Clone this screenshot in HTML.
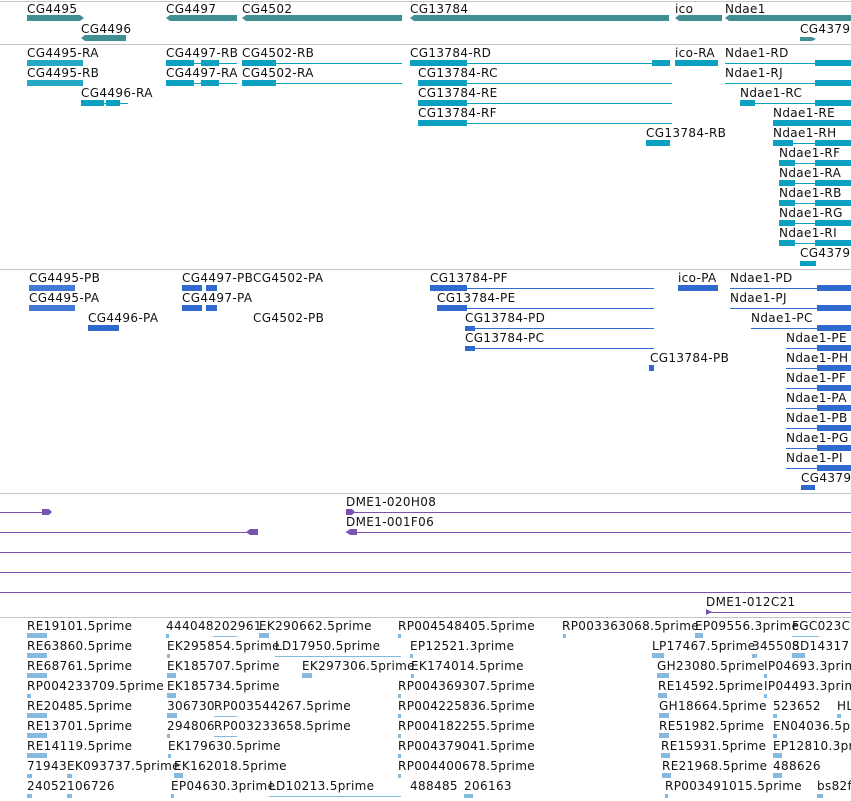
<!DOCTYPE html>
<html><head><meta charset="utf-8"><style>
html,body{margin:0;padding:0;background:#fff;width:851px;height:801px;overflow:hidden}
svg{display:block}
text{font-family:"DejaVu Sans","Liberation Sans",sans-serif;font-size:12px;fill:#111;letter-spacing:0.35px}
.g{fill:#3f8f93}.t{fill:#0b9fc0}.tl{stroke:#0b9fc0;stroke-width:1}
.p{fill:#3069d0}.pl{stroke:#3069d0;stroke-width:1}
.u{fill:#7a55b0}.ul{stroke:#7a55b0;stroke-width:1}
.e{fill:#86b9de}.el{stroke:#86b9de;stroke-width:1}
.s{stroke:#c4c4c4;stroke-width:1}
</style></head><body>
<svg width="851" height="801" xmlns="http://www.w3.org/2000/svg">
<line class="s" x1="0" y1="1.5" x2="851" y2="1.5"/>
<line class="s" x1="0" y1="44.5" x2="851" y2="44.5"/>
<line class="s" x1="0" y1="269.5" x2="851" y2="269.5"/>
<line class="s" x1="0" y1="493.5" x2="851" y2="493.5"/>
<line class="s" x1="0" y1="617.5" x2="851" y2="617.5"/>

<!-- genes -->
<text x="27" y="13">CG4495</text><polygon class="g" points="27,15 80,15 84,18 80,21 27,21"/>
<text x="81" y="33">CG4496</text><polygon class="g" points="85,35 126,35 126,41 85,41 81,38"/>
<text x="166" y="13">CG4497</text><polygon class="g" points="170,15 237,15 237,21 170,21 166,18"/>
<text x="242" y="13">CG4502</text><polygon class="g" points="246,15 402,15 402,21 246,21 242,18"/>
<text x="410" y="13">CG13784</text><polygon class="g" points="414,15 669,15 669,21 414,21 410,18"/>
<text x="675" y="13">ico</text><polygon class="g" points="679,15 722,15 722,21 679,21 675,18"/>
<text x="725" y="13">Ndae1</text><polygon class="g" points="729,15 851,15 851,21 729,21 725,18"/>
<text x="800" y="33">CG4379</text><polygon class="g" points="800,37 812,37 816,39 812,41 800,41"/>

<!-- transcripts -->
<g>
<text x="27" y="57">CG4495-RA</text><rect class="t" x="27" y="60" width="56" height="6" opacity=".9"/>
<text x="27" y="77">CG4495-RB</text><rect class="t" x="27" y="80" width="56" height="6" opacity=".9"/>
<text x="81" y="97">CG4496-RA</text><rect class="t" x="81" y="100" width="23" height="6"/><rect class="t" x="106" y="100" width="14" height="6"/><line class="tl" x1="81" y1="103.5" x2="128" y2="103.5"/>
<text x="166" y="57">CG4497-RB</text><rect class="t" x="166" y="60" width="28" height="6"/><rect class="t" x="201" y="60" width="18" height="6"/><line class="tl" x1="166" y1="63.5" x2="237" y2="63.5"/>
<text x="166" y="77">CG4497-RA</text><rect class="t" x="166" y="80" width="28" height="6"/><rect class="t" x="201" y="80" width="18" height="6"/><line class="tl" x1="166" y1="83.5" x2="237" y2="83.5"/>
<text x="242" y="57">CG4502-RB</text><rect class="t" x="242" y="60" width="34" height="6"/><line class="tl" x1="242" y1="63.5" x2="402" y2="63.5"/>
<text x="242" y="77">CG4502-RA</text><rect class="t" x="242" y="80" width="34" height="6"/><line class="tl" x1="242" y1="83.5" x2="402" y2="83.5"/>
<text x="410" y="57">CG13784-RD</text><rect class="t" x="410" y="60" width="57" height="6"/><rect class="t" x="652" y="60" width="18" height="6"/><line class="tl" x1="410" y1="63.5" x2="670" y2="63.5"/>
<text x="418" y="77">CG13784-RC</text><rect class="t" x="418" y="80" width="49" height="6"/><line class="tl" x1="418" y1="83.5" x2="672" y2="83.5"/>
<text x="418" y="97">CG13784-RE</text><rect class="t" x="418" y="100" width="49" height="6"/><line class="tl" x1="418" y1="103.5" x2="672" y2="103.5"/>
<text x="418" y="117">CG13784-RF</text><rect class="t" x="418" y="120" width="49" height="6"/><line class="tl" x1="418" y1="123.5" x2="672" y2="123.5"/>
<text x="646" y="137">CG13784-RB</text><rect class="t" x="646" y="140" width="24" height="6"/>
<text x="675" y="57">ico-RA</text><rect class="t" x="675" y="60" width="43" height="6"/>
<text x="725" y="57">Ndae1-RD</text><line class="tl" x1="725" y1="63.5" x2="851" y2="63.5"/><rect class="t" x="815" y="60" width="36" height="6"/>
<text x="725" y="77">Ndae1-RJ</text><line class="tl" x1="725" y1="83.5" x2="851" y2="83.5"/><rect class="t" x="815" y="80" width="36" height="6"/>
<text x="740" y="97">Ndae1-RC</text><rect class="t" x="740" y="100" width="15" height="6"/><line class="tl" x1="740" y1="103.5" x2="851" y2="103.5"/><rect class="t" x="815" y="100" width="36" height="6"/>
<text x="773" y="117">Ndae1-RE</text><rect class="t" x="773" y="120" width="78" height="6"/>
<text x="773" y="137">Ndae1-RH</text><rect class="t" x="773" y="140" width="20" height="6"/><line class="tl" x1="773" y1="143.5" x2="851" y2="143.5"/><rect class="t" x="815" y="140" width="36" height="6"/>
<text x="779" y="157">Ndae1-RF</text><rect class="t" x="779" y="160" width="16" height="6"/><line class="tl" x1="779" y1="163.5" x2="851" y2="163.5"/><rect class="t" x="815" y="160" width="36" height="6"/>
<text x="779" y="177">Ndae1-RA</text><rect class="t" x="779" y="180" width="16" height="6"/><line class="tl" x1="779" y1="183.5" x2="851" y2="183.5"/><rect class="t" x="815" y="180" width="36" height="6"/>
<text x="779" y="197">Ndae1-RB</text><rect class="t" x="779" y="200" width="16" height="6"/><line class="tl" x1="779" y1="203.5" x2="851" y2="203.5"/><rect class="t" x="815" y="200" width="36" height="6"/>
<text x="779" y="217">Ndae1-RG</text><rect class="t" x="779" y="220" width="16" height="6"/><line class="tl" x1="779" y1="223.5" x2="851" y2="223.5"/><rect class="t" x="815" y="220" width="36" height="6"/>
<text x="779" y="237">Ndae1-RI</text><rect class="t" x="779" y="240" width="16" height="6"/><line class="tl" x1="779" y1="243.5" x2="851" y2="243.5"/><rect class="t" x="815" y="240" width="36" height="6"/>
<text x="800" y="257">CG4379</text><rect class="t" x="800" y="261" width="16" height="5"/>
</g>

<!-- proteins -->
<g>
<text x="29" y="282">CG4495-PB</text><rect class="p" x="29" y="285" width="46" height="6" opacity=".9"/>
<text x="29" y="302">CG4495-PA</text><rect class="p" x="29" y="305" width="46" height="6" opacity=".9"/>
<text x="88" y="322">CG4496-PA</text><rect class="p" x="88" y="325" width="31" height="6"/>
<text x="182" y="282">CG4497-PB</text><rect class="p" x="182" y="285" width="20" height="6"/><rect class="p" x="206" y="285" width="11" height="6"/>
<text x="182" y="302">CG4497-PA</text><rect class="p" x="182" y="305" width="20" height="6"/><rect class="p" x="206" y="305" width="11" height="6"/>
<text x="253" y="282">CG4502-PA</text>
<text x="253" y="322">CG4502-PB</text>
<text x="430" y="282">CG13784-PF</text><rect class="p" x="430" y="285" width="37" height="6"/><line class="pl" x1="430" y1="288.5" x2="654" y2="288.5"/>
<text x="437" y="302">CG13784-PE</text><rect class="p" x="437" y="305" width="30" height="6"/><line class="pl" x1="437" y1="308.5" x2="654" y2="308.5"/>
<text x="465" y="322">CG13784-PD</text><line class="pl" x1="465" y1="328.5" x2="654" y2="328.5"/><rect class="p" x="465" y="326" width="10" height="5"/>
<text x="465" y="342">CG13784-PC</text><line class="pl" x1="465" y1="348.5" x2="654" y2="348.5"/><rect class="p" x="465" y="346" width="10" height="5"/>
<text x="650" y="362">CG13784-PB</text><rect class="p" x="649" y="365" width="5" height="6"/>
<text x="678" y="282">ico-PA</text><rect class="p" x="678" y="285" width="40" height="6"/>
<text x="730" y="282">Ndae1-PD</text><line class="pl" x1="730" y1="288.5" x2="851" y2="288.5"/><rect class="p" x="817" y="285" width="34" height="6"/>
<text x="730" y="302">Ndae1-PJ</text><line class="pl" x1="730" y1="308.5" x2="851" y2="308.5"/><rect class="p" x="817" y="305" width="34" height="6"/>
<text x="751" y="322">Ndae1-PC</text><line class="pl" x1="751" y1="328.5" x2="851" y2="328.5"/><rect class="p" x="817" y="325" width="34" height="6"/>
<text x="786" y="342">Ndae1-PE</text><line class="pl" x1="786" y1="348.5" x2="851" y2="348.5"/><rect class="p" x="817" y="345" width="34" height="6"/>
<text x="786" y="362">Ndae1-PH</text><line class="pl" x1="786" y1="368.5" x2="851" y2="368.5"/><rect class="p" x="817" y="365" width="34" height="6"/>
<text x="786" y="382">Ndae1-PF</text><line class="pl" x1="786" y1="388.5" x2="851" y2="388.5"/><rect class="p" x="817" y="385" width="34" height="6"/>
<text x="786" y="402">Ndae1-PA</text><line class="pl" x1="786" y1="408.5" x2="851" y2="408.5"/><rect class="p" x="817" y="405" width="34" height="6"/>
<text x="786" y="422">Ndae1-PB</text><line class="pl" x1="786" y1="428.5" x2="851" y2="428.5"/><rect class="p" x="817" y="425" width="34" height="6"/>
<text x="786" y="442">Ndae1-PG</text><line class="pl" x1="786" y1="448.5" x2="851" y2="448.5"/><rect class="p" x="817" y="445" width="34" height="6"/>
<text x="786" y="462">Ndae1-PI</text><line class="pl" x1="786" y1="468.5" x2="851" y2="468.5"/><rect class="p" x="817" y="465" width="34" height="6"/>
<text x="801" y="482">CG4379</text><rect class="p" x="801" y="485" width="14" height="5"/>
</g>

<!-- purple -->
<line class="ul" x1="0" y1="512.5" x2="50" y2="512.5"/><polygon class="u" points="42,509 49,509 52,512 49,515 42,515"/>
<text x="346" y="506">DME1-020H08</text><line class="ul" x1="346" y1="512.5" x2="851" y2="512.5"/><polygon class="u" points="346,509 352,509 355,512 352,515 346,515"/>
<line class="ul" x1="0" y1="532.5" x2="258" y2="532.5"/><polygon class="u" points="250,529 258,529 258,535 250,535 246,532"/>
<text x="346" y="526">DME1-001F06</text><line class="ul" x1="346" y1="532.5" x2="851" y2="532.5"/><polygon class="u" points="350,529 357,529 357,535 350,535 346,532"/>
<line class="ul" x1="0" y1="552.5" x2="851" y2="552.5"/>
<line class="ul" x1="0" y1="572.5" x2="851" y2="572.5"/>
<line class="ul" x1="0" y1="592.5" x2="851" y2="592.5"/>
<text x="706" y="606">DME1-012C21</text><line class="ul" x1="706" y1="612.5" x2="851" y2="612.5"/><polygon class="u" points="706,609 712,612 706,615"/>

<!-- ESTs -->
<g>
<text x="27" y="630">RE19101.5prime</text><rect class="e" x="27" y="633" width="20" height="5"/>
<text x="166" y="630">444048202961</text><text x="259" y="630">EK290662.5prime</text><rect class="e" x="166" y="634" width="3" height="4"/><line class="el" x1="213" y1="636.5" x2="237" y2="636.5"/><rect class="e" x="259" y="633" width="10" height="5"/>
<text x="398" y="630">RP004548405.5prime</text><rect class="e" x="398" y="634" width="3" height="4"/>
<text x="562" y="630">RP003363068.5prime</text><rect class="e" x="563" y="634" width="3" height="4"/>
<text x="695" y="630">EP09556.3prime</text><rect class="e" x="695" y="633" width="8" height="5"/>
<text x="792" y="630">FGC023C1</text><line class="el" x1="792" y1="636.5" x2="819" y2="636.5"/>

<text x="27" y="650">RE63860.5prime</text><rect class="e" x="27" y="653" width="20" height="5"/>
<text x="167" y="650">EK295854.5prime</text><rect class="e" x="167" y="654" width="3" height="4"/>
<text x="275" y="650">LD17950.5prime</text><line class="el" x1="275" y1="656.5" x2="401" y2="656.5"/>
<text x="410" y="650">EP12521.3prime</text><rect class="e" x="410" y="654" width="3" height="4"/>
<text x="652" y="650">LP17467.5prime</text><rect class="e" x="652" y="653" width="12" height="5"/>
<text x="752" y="650">345508</text><text x="792" y="650">SD14317</text><rect class="e" x="752" y="654" width="5" height="4"/><rect class="e" x="792" y="653" width="13" height="5"/>

<text x="27" y="670">RE68761.5prime</text><rect class="e" x="27" y="673" width="20" height="5"/>
<text x="167" y="670">EK185707.5prime</text><rect class="e" x="167" y="673" width="9" height="5"/>
<text x="302" y="670">EK297306.5prime</text><rect class="e" x="302" y="673" width="10" height="5"/>
<text x="411" y="670">EK174014.5prime</text><rect class="e" x="411" y="674" width="3" height="4"/>
<text x="657" y="670">GH23080.5prime</text><rect class="e" x="657" y="673" width="12" height="5"/>
<text x="764" y="670">IP04693.3prime</text><rect class="e" x="764" y="674" width="3" height="4"/>

<text x="27" y="690">RP004233709.5prime</text><rect class="e" x="27" y="694" width="4" height="4"/>
<text x="167" y="690">EK185734.5prime</text><rect class="e" x="167" y="693" width="9" height="5"/>
<text x="398" y="690">RP004369307.5prime</text><rect class="e" x="398" y="694" width="3" height="4"/>
<text x="658" y="690">RE14592.5prime</text><rect class="e" x="658" y="693" width="9" height="5"/>
<text x="764" y="690">IP04493.3prime</text><rect class="e" x="764" y="694" width="3" height="4"/>

<text x="27" y="710">RE20485.5prime</text><rect class="e" x="27" y="713" width="20" height="5"/>
<text x="167" y="710">306730</text><text x="214" y="710">RP003544267.5prime</text><rect class="e" x="167" y="713" width="10" height="5"/><line class="el" x1="214" y1="716.5" x2="237" y2="716.5"/>
<text x="398" y="710">RP004225836.5prime</text><rect class="e" x="398" y="714" width="3" height="4"/>
<text x="659" y="710">GH18664.5prime</text><rect class="e" x="659" y="713" width="10" height="5"/>
<text x="773" y="710">523652</text><text x="837" y="710">HL</text><rect class="e" x="773" y="714" width="4" height="4"/><rect class="e" x="837" y="714" width="4" height="4"/>

<text x="27" y="730">RE13701.5prime</text><rect class="e" x="27" y="733" width="20" height="5"/>
<text x="167" y="730">294806</text><text x="214" y="730">RP003233658.5prime</text><rect class="e" x="167" y="734" width="3" height="4"/><line class="el" x1="214" y1="736.5" x2="237" y2="736.5"/>
<text x="398" y="730">RP004182255.5prime</text><rect class="e" x="398" y="734" width="3" height="4"/>
<text x="659" y="730">RE51982.5prime</text><rect class="e" x="659" y="733" width="10" height="5"/>
<text x="773" y="730">EN04036.5p</text><rect class="e" x="773" y="734" width="4" height="4"/>

<text x="27" y="750">RE14119.5prime</text><rect class="e" x="27" y="753" width="20" height="5"/>
<text x="168" y="750">EK179630.5prime</text><rect class="e" x="168" y="754" width="3" height="4"/>
<text x="398" y="750">RP004379041.5prime</text><rect class="e" x="398" y="754" width="3" height="4"/>
<text x="661" y="750">RE15931.5prime</text><rect class="e" x="661" y="753" width="9" height="5"/>
<text x="773" y="750">EP12810.3pr</text><rect class="e" x="773" y="753" width="9" height="5"/>

<text x="27" y="770">71943</text><text x="67" y="770">EK093737.5prime</text><text x="174" y="770">EK162018.5prime</text><rect class="e" x="27" y="774" width="5" height="4"/><rect class="e" x="67" y="774" width="5" height="4"/><rect class="e" x="174" y="773" width="9" height="5"/>
<text x="398" y="770">RP004400678.5prime</text><rect class="e" x="398" y="774" width="3" height="4"/>
<text x="662" y="770">RE21968.5prime</text><rect class="e" x="662" y="773" width="9" height="5"/>
<text x="773" y="770">488626</text><rect class="e" x="773" y="773" width="9" height="5"/>

<text x="27" y="790">24052</text><text x="67" y="790">106726</text><rect class="e" x="27" y="794" width="5" height="4"/><rect class="e" x="67" y="794" width="5" height="4"/>
<text x="171" y="790">EP04630.3prime</text><rect class="e" x="171" y="794" width="3" height="4"/>
<text x="269" y="790">LD10213.5prime</text><line class="el" x1="269" y1="796.5" x2="401" y2="796.5"/>
<text x="410" y="790">488485</text><text x="464" y="790">206163</text><rect class="e" x="464" y="794" width="9" height="4"/>
<text x="665" y="790">RP003491015.5prime</text><rect class="e" x="665" y="794" width="3" height="4"/>
<text x="817" y="790">bs82f</text><rect class="e" x="817" y="794" width="6" height="4"/>
</g>
</svg>
</body></html>
